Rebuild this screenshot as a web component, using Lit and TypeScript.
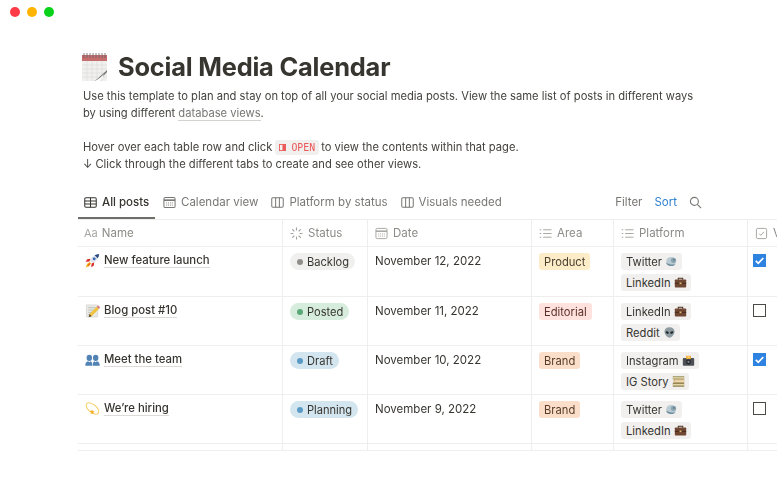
import { LitElement, html, css, svg } from "lit";
import { customElement } from "lit/decorators.js";

const icons: Record<string, any> = {
  rocket: svg`<path d="M15 1c-4.500.3-7.800 2.800-9.800 6.600l3.200 3.200C12.200 8.800 14.800 5.500 15 1z" fill="#dfe3ea"/><path d="M15 1c-1.700.1-3.300.6-4.700 1.400l3.300 3.300C14.500 4.300 15 2.700 15 1z" fill="#27457e"/><circle cx="9.800" cy="6.200" r="1.500" fill="#2f5fb0"/><path d="M5.800 6.200 2.300 6.700.7 9.300l4-.3zM9.800 10.200l-.5 3.500-2.600 1.600.3-4z" fill="#d92b2b"/><path d="M5 9.500 6.500 11l-2 3.200-3.600 1.300 1.200-3.700z" fill="#f7b21b"/><path d="M4.800 10.800l.7.700-1.400 1.800-1.200.4.400-1.200z" fill="#e8481f"/>`,
  memo: svg`<rect x="1.500" y="2" width="12" height="13" rx=".5" fill="#e9e9e6" stroke="#c4c4c0" stroke-width=".5"/><path d="M3.500 5h8M3.500 7.500h8M3.500 10h5M3.500 12.500h3" stroke="#a9a9a5" stroke-width=".7"/><path d="M4 14.800l.8-3L12.500 4l2.300 2.300-7.800 7.700z" fill="#f0c33c"/><path d="M12.500 4l2.300 2.300 1-1c.3-.4.300-.8 0-1.100l-1.200-1.200c-.3-.3-.7-.3-1.100 0z" fill="#d9808a"/><path d="M4 14.800l.8-3 2.200 2.200z" fill="#4c4034"/>`,
  people: svg`<g fill="#5183b4"><ellipse cx="4.600" cy="6.200" rx="2.900" ry="3.400"/><ellipse cx="11.400" cy="6.200" rx="2.900" ry="3.400"/><path d="M.3 14.600c0-3.200 1.300-4.200 3-4.800l1.300 1 1.300-1c1.300.5 1.900 1.300 1.900 4.800zM8.300 14.600c0-3.500.6-4.300 1.800-4.800l1.300 1 1.300-1c1.700.6 3 1.600 3 4.800z"/></g>`,
  dizzy: svg`<ellipse cx="8" cy="8" rx="8" ry="4.200" transform="rotate(40 8 8)" fill="none" stroke="#f7d272" stroke-width="1.200"/><path d="M7.500 9l.9 1.600 1.900.2-1.300 1.300.4 1.800-1.700-.9-1.600.9.300-1.900-1.400-1.300 1.900-.2z" fill="#f4b02a"/>`,
  turtle: svg`<ellipse cx="7.500" cy="8" rx="6" ry="5.500" fill="#b9cad3"/><path d="M1.500 9.500c0 2.300 2.700 4 6 4 2.500 0 4.800-1 5.700-2.500-2.500 1-8 1.200-11.700-1.500z" fill="#6d8b9c"/><circle cx="10.500" cy="6.500" r="3.200" fill="#8aa4b2"/><circle cx="11" cy="6" r=".7" fill="#33454f"/>`,
  briefcase: svg`<path d="M5.300 4.500V2.800h5.400v1.700" fill="none" stroke="#4b2f20" stroke-width="1.300"/><rect x="1" y="4.300" width="14" height="10" rx="1" fill="#6f4632"/><path d="M1 9h14" stroke="#3a2418" stroke-width="1"/><rect x="6.800" y="8" width="2.400" height="2" fill="#e0bc72"/>`,
  alien: svg`<path d="M8 1.500c3.900 0 6.200 2.500 6.200 5.300 0 3.600-3.600 7.700-6.200 7.700s-6.200-4.100-6.200-7.700C1.800 4 4.100 1.500 8 1.500z" fill="#8e9ba0"/><ellipse cx="5.200" cy="8" rx="2" ry="1.300" fill="#1e2528" transform="rotate(28 5.200 8)"/><ellipse cx="10.800" cy="8" rx="2" ry="1.300" fill="#1e2528" transform="rotate(-28 10.800 8)"/>`,
  camera: svg`<rect x="1" y="5" width="14" height="9.500" rx="1.200" fill="#4c5054"/><rect x="5" y="2" width="6" height="4" rx=".6" fill="#f2a92c"/><rect x="6.500" y="3" width="3" height="1.600" fill="#fbe29a"/><circle cx="8" cy="9.800" r="3" fill="#24262a"/><circle cx="8" cy="9.800" r="1.400" fill="#7d8790"/>`,
  books: svg`<rect x="1" y="1.500" width="14" height="4" fill="#9a9060"/><rect x="1" y="2.500" width="14" height="2" fill="#d9cf9d"/><rect x="2" y="5.500" width="13" height="4" fill="#c89a62"/><rect x="3" y="6.500" width="12" height="2" fill="#f0e2b8"/><rect x="1" y="9.500" width="14" height="5" fill="#8f8450"/><rect x="1" y="11" width="14" height="2" fill="#e1d5a6"/>`,
};
const ic = (n: string) => html`<svg class="emo" viewBox="0 0 16 16">${icons[n]}</svg>`;

const tableIcon = html`<svg class="ti" viewBox="0 0 14 14" fill="none" stroke="currentColor" stroke-width="1.100"><rect x=".8" y="2" width="12.400" height="10" rx="1.200"/><path d="M.8 5.300h12.400M.8 8.700h12.400M7 2v10"/></svg>`;
const calIcon = html`<svg class="ti" viewBox="0 0 14 14" fill="none" stroke="currentColor" stroke-width="1.100"><rect x="1" y="1.500" width="12" height="11" rx="1.500"/><path d="M1 4.500h12" stroke-width="1.800"/><path d="M3.500 7.500h7M3.500 9.800h7" stroke-width="1" stroke-dasharray="1 1"/></svg>`;
const boardIcon = html`<svg class="ti" viewBox="0 0 14 14" fill="none" stroke="currentColor" stroke-width="1.100"><rect x=".8" y="2" width="12.400" height="10" rx="1.200"/><path d="M5 2v10M9 2v10"/></svg>`;
const listIcon = html`<svg class="hi" viewBox="0 0 14 14" fill="none" stroke="currentColor" stroke-width="1"><path d="M4.500 3h9M4.500 7h9M4.500 11h9"/><path d="M.8 3h1.600M.8 7h1.600M.8 11h1.600" stroke-width="1.200"/></svg>`;
const statusIcon = html`<svg class="hi" viewBox="0 0 14 14" fill="none" stroke="currentColor" stroke-width="1.200" stroke-linecap="round"><path d="M7 1v2.200M7 10.800V13M1 7h2.200M10.800 7H13M2.800 2.800l1.500 1.500M9.700 9.700l1.500 1.500M2.800 11.200l1.500-1.500M9.700 4.300l1.500-1.500"/></svg>`;
const checkHead = html`<svg class="hi" viewBox="0 0 14 14" fill="none" stroke="currentColor" stroke-width="1"><rect x="1.500" y="1.500" width="11" height="11" rx="1.500"/><path d="M4.500 7.200l1.800 1.800 3.300-3.800"/></svg>`;

const rows = [
  { e: "rocket", n: "New feature launch", s: "Backlog", c: "gray", d: "November 12, 2022", a: "Product", ac: "yellow", p: [["Twitter", "turtle"], ["LinkedIn", "briefcase"]], v: true },
  { e: "memo", n: "Blog post #10", s: "Posted", c: "green", d: "November 11, 2022", a: "Editorial", ac: "red", p: [["LinkedIn", "briefcase"], ["Reddit", "alien"]], v: false },
  { e: "people", n: "Meet the team", s: "Draft", c: "blue", d: "November 10, 2022", a: "Brand", ac: "orange", p: [["Instagram", "camera"], ["IG Story", "books"]], v: true },
  { e: "dizzy", n: "We’re hiring", s: "Planning", c: "blue", d: "November 9, 2022", a: "Brand", ac: "orange", p: [["Twitter", "turtle"], ["LinkedIn", "briefcase"]], v: false },
];

@customElement("app-root")
export class AppRoot extends LitElement {
  static styles = css`
    :host { display: block; width: 777px; height: 479px; overflow: hidden; background: #fff; position: relative;
      font-family: Inter, "Noto Sans", sans-serif; color: #37352f; font-size: 11.5px; }
    .inner { filter: blur(0.4px); height: 100%; }
    .lights { display: flex; gap: 7px; padding: 7px 0 0 10px; height: 10px; }
    .lights i { width: 10px; height: 10px; border-radius: 50%; display: block; }
    .doc { padding: 32px 0 0 78px; }
    h1 { margin: 0 0 0 3px; height: 35px; display: flex; align-items: center; gap: 10px; font-size: 25.4px; font-weight: 700; letter-spacing: -0.2px; color: #37352f; }
    .cal { width: 27px; height: 30px; flex: none; }
    .para { margin: 4px 0 0 5px; line-height: 17px; width: 618px; color: #45433e; font-size: 11.18px; }
    .para + .para { margin-top: 17px; }
    .link { color: #787774; border-bottom: 1px solid #d4d3d0; }
    .code { display: inline-flex; align-items: center; gap: 5px; height: 15px; padding: 0 4px; margin: 0 -1px 0 0; background: #f1f0ef; border-radius: 3px; color: #eb5757; font-family: "DejaVu Sans Mono", monospace; font-size: 9.8px; }
    .code svg { width: 7px; height: 7px; }
    .tabs { display: flex; align-items: stretch; height: 35px; margin-top: 11px; width: 699px; color: #787774; }
    .tab { display: flex; align-items: center; gap: 5px; margin-right: 13px; padding-top: 3px; box-sizing: border-box; border-bottom: 2px solid transparent; }
    .tab.on { color: #37352f; font-weight: 500; border-bottom-color: #6f6e69; padding-left: 6px; width: 77px; margin-right: 8px; }
    .ti { width: 13px; height: 13px; flex: none; }
    .tools { margin-left: auto; display: flex; align-items: center; gap: 12px; padding: 3px 75px 2px 0; }
    .tools b { font-weight: 400; color: #2f80d0; }
    .tools svg { width: 13px; height: 13px; }
    .row { display: grid; grid-template-columns: 205px 85px 164px 82px 134px 29px; width: 699px; border-bottom: 1px solid #eeeeed; box-sizing: border-box; height: 49px; }
    .row.head { border-top: 1px solid #eeeeed; height: 28px; color: #8c8b87; }
    .row.first { height: 50px; }
    .row.tail { height: 7px; }
    .c { border-right: 1px solid #eeeeed; box-sizing: border-box; padding: 6px 7px; min-width: 0; }
    .tail .c { padding: 0; }
    .c:last-child { border-right: 0; }
    .head .c { display: flex; align-items: center; gap: 5px; padding: 0 7px; }
    .head .c:first-child { padding-left: 6px; gap: 4px; }
    .aa i { font-style: normal; color: #a8a7a3; font-size: 11px; }
    .hi { width: 13px; height: 13px; color: #a3a29e; flex: none; }
    .c.n { display: flex; gap: 4px; align-items: flex-start; padding: 6px 7px; }
    .emo { width: 15px; height: 15px; flex: none; margin-top: 0; }
    .n u { text-decoration: none; font-weight: 500; font-size: 11.35px; border-bottom: 1px solid #dcdbd8; line-height: 14px; }
    .st { display: inline-flex; align-items: center; gap: 4px; height: 17px; padding: 0 6px 0 7px; border-radius: 9px; font-size: 11.1px; }
    .st::before { content: ""; width: 6px; height: 6px; border-radius: 50%; background: var(--d); }
    .gray { background: #f0f0ef; --d: #8f8e8a; }
    .green { background: #d6ecdc; --d: #5aa876; }
    .blue { background: #d3e5ef; --d: #5a9ac4; }
    .c.d { padding-top: 7px; }
    .tag { display: inline-flex; align-items: center; gap: 3px; height: 17px; padding: 0 5px; border-radius: 3px; font-size: 11.2px; }
    .yellow { background: #fdecc8; color: #4a4030; }
    .red { background: #ffe2dd; color: #5d2f2a; }
    .orange { background: #fadec9; color: #5a3c28; }
    .c.pl { display: flex; flex-direction: column; gap: 4px; align-items: flex-start; }
    .pl span { background: #f1f0ef; padding-right: 4px; }
    .pl .emo { width: 13px; height: 13px; margin: 0; }
    .c.v { padding: 7px 5px; }
    .box { width: 13px; height: 13px; box-sizing: border-box; display: flex; }
    .box.off { border: 1.5px solid #4a4a46; }
    .box.on { background: #2e82e0; }
    .box svg { width: 13px; height: 13px; }
  `;
  render() {
    return html`<div class="inner">
      <div class="lights"><i style="background:#ff3b48"></i><i style="background:#ffb400"></i><i style="background:#0ad21a"></i></div>
      <div class="doc">
        <h1><svg class="cal" viewBox="0 0 27 30">
          <rect x="1" y="3" width="25" height="26" fill="#f0f0ee"/>
          <rect x="1" y="3" width="25" height="6" fill="#c56d6d"/>
          <path d="M3 1v5M6 1v5M9 1v5M12 1v5M15 1v5M18 1v5M21 1v5M24 1v5" stroke="#666" stroke-width=".8"/>
          <path d="M1 13h25M1 17h25M1 21h25M1 25h25M6 9v20M11 9v20M16 9v20M21 9v20" stroke="#dedddb" stroke-width=".7"/>
          <path d="M13 29c3-1 6-5 11-9l2-2v2c-3 3-5 6-7 9z" fill="#777"/>
          <path d="M13 29c4-1 7-4 10-7-1 3-2 5-4 7z" fill="#fff"/>
        </svg>Social Media Calendar</h1>
        <div class="para">Use this template to plan and stay on top of all your social media posts. View the same list of posts in different ways by using different <span class="link">database views</span>.</div>
        <div class="para">Hover over each table row and click <span class="code"><svg viewBox="0 0 8 8"><rect x=".5" y=".5" width="7" height="7" fill="none" stroke="#eb5757"/><rect x="4" y=".5" width="3.500" height="7" fill="#eb5757"/></svg>OPEN</span> to view the contents within that page.<br>↓ Click through the different tabs to create and see other views.</div>
        <div class="tabs">
          <div class="tab on">${tableIcon}All posts</div>
          <div class="tab">${calIcon}Calendar view</div>
          <div class="tab">${boardIcon}Platform by status</div>
          <div class="tab">${boardIcon}Visuals needed</div>
          <div class="tools"><span>Filter</span><b>Sort</b><svg viewBox="0 0 14 14" fill="none" stroke="#787774" stroke-width="1.200"><circle cx="5.800" cy="5.800" r="4.300"/><path d="M9 9l4 4"/></svg></div>
        </div>
        <div class="row head">
          <div class="c aa"><i>Aa</i> Name</div>
          <div class="c">${statusIcon}Status</div>
          <div class="c"><svg class="hi" viewBox="0 0 14 14" fill="none" stroke="currentColor"><rect x="1" y="1.500" width="12" height="11" rx="1.500"/><path d="M1 4.500h12" stroke-width="1.600"/><path d="M3.500 7.500h7M3.500 9.800h7" stroke-dasharray="1 1"/></svg>Date</div>
          <div class="c">${listIcon}Area</div>
          <div class="c">${listIcon}Platform</div>
          <div class="c">${checkHead}V</div>
        </div>
        ${rows.map((r, i) => html`<div class="row ${i === 0 ? "first" : ""}">
          <div class="c n">${ic(r.e)}<u>${r.n}</u></div>
          <div class="c"><span class="st ${r.c}">${r.s}</span></div>
          <div class="c d">${r.d}</div>
          <div class="c"><span class="tag ${r.ac}">${r.a}</span></div>
          <div class="c pl">${r.p.map(([t, e]) => html`<span class="tag">${t}${ic(e)}</span>`)}</div>
          <div class="c v"><div class="box ${r.v ? "on" : "off"}">${r.v ? html`<svg viewBox="0 0 13 13" fill="none" stroke="#fff" stroke-width="1.800"><path d="M2.800 6.800l2.500 2.500 5-5.300"/></svg>` : ""}</div></div>
        </div>`)}
        <div class="row tail"><div class="c"></div><div class="c"></div><div class="c"></div><div class="c"></div><div class="c"></div><div class="c"></div></div>
      </div>
    </div>`;
  }
}
